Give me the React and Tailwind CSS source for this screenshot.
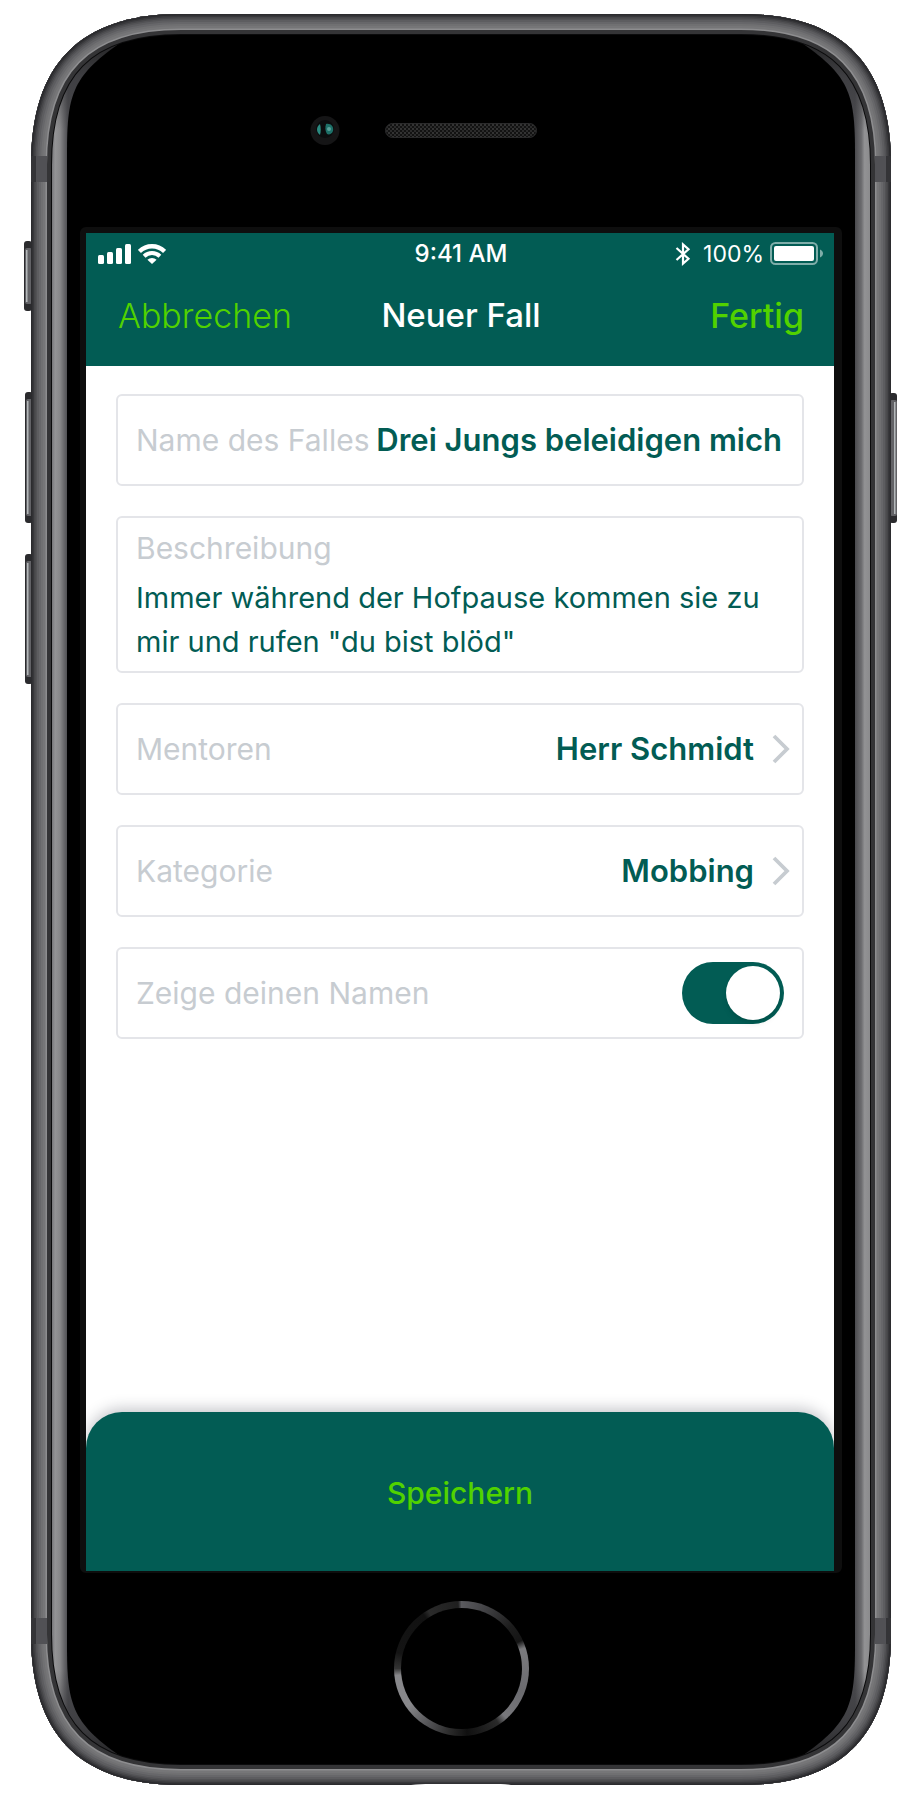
import { useState } from "react";

const BODY =
  "M181 14H741C842 14 891 64 891 165V1634C891 1735 842 1785 741 1785H181C80 1785 31 1735 31 1634V165C31 64 80 14 181 14Z";

// Edge shading of the aluminium band, from the inside out: [depth, colour]
const BAND = [
  [21, "#0b0b0c"],
  [20, "#343436"],
  [16, "#8d8d8f"],
  [14.5, "#767678"],
  [12, "#707072"],
  [10, "#67676a"],
  [8, "#5d5d60"],
  [6, "#525255"],
  [4.5, "#464649"],
  [3, "#38383b"],
  [1.5, "#2b2b2e"],
];

function SideButton({ x, y, height, flip }) {
  const shine = flip ? x + 5 : x + 2;
  return (
    <g>
      <rect x={x} y={y} width="8" height={height} rx="3" fill="#2b2b2e" />
      <rect x={x + 1} y={y + 7} width="7" height={height - 14} rx="2" fill="#626266" />
      <rect x={shine} y={y + 9} width="1.5" height={height - 18} fill="#b4b8ba" />
    </g>
  );
}

function DeviceShell() {
  return (
    <svg
      className="absolute inset-0 h-full w-full"
      viewBox="0 0 920 1800"
      preserveAspectRatio="none"
      aria-hidden="true"
    >
      <defs>
        <clipPath id="body-clip">
          <path d={BODY} />
        </clipPath>
        <linearGradient id="bevel-left" gradientUnits="userSpaceOnUse" x1="52" x2="68" y1="0" y2="0">
          <stop offset="0" stopColor="#77777a" />
          <stop offset="0.2" stopColor="#949496" />
          <stop offset="0.5" stopColor="#88888a" />
          <stop offset="0.75" stopColor="#68686b" />
          <stop offset="1" stopColor="#4a4a4e" />
        </linearGradient>
        <linearGradient id="bevel-right" gradientUnits="userSpaceOnUse" x1="855" x2="871" y1="0" y2="0">
          <stop offset="0" stopColor="#4a4a4e" />
          <stop offset="0.4" stopColor="#6c6c6f" />
          <stop offset="0.6" stopColor="#929294" />
          <stop offset="1" stopColor="#8a8a8c" />
        </linearGradient>
        <linearGradient id="bevel-fade" gradientUnits="userSpaceOnUse" x1="0" x2="0" y1="35" y2="1765">
          <stop offset="0.01" stopColor="#2c2c2e" stopOpacity="1" />
          <stop offset="0.025" stopColor="#38383b" stopOpacity="0.6" />
          <stop offset="0.055" stopColor="#38383b" stopOpacity="0" />
          <stop offset="0.945" stopColor="#38383b" stopOpacity="0" />
          <stop offset="0.975" stopColor="#38383b" stopOpacity="0.6" />
          <stop offset="0.99" stopColor="#2c2c2e" stopOpacity="1" />
        </linearGradient>
        <pattern id="mesh" width="4" height="4" patternUnits="userSpaceOnUse">
          <rect width="4" height="4" fill="#121212" />
          <rect width="2" height="2" fill="#333333" />
          <rect x="2" y="2" width="2" height="2" fill="#2b2b2b" />
        </pattern>
      </defs>

      <SideButton x={24} y={241} height={70} />
      <SideButton x={25} y={392} height={131} />
      <SideButton x={25} y={554} height={130} />
      <SideButton x={889} y={393} height={130} flip />

      <g clipPath="url(#body-clip)">
        <rect x="31" y="14" width="430" height="1771" fill="url(#bevel-left)" />
        <rect x="461" y="14" width="430" height="1771" fill="url(#bevel-right)" />
        <rect x="31" y="14" width="860" height="1771" fill="url(#bevel-fade)" />
        <path
          d="M67 155C67 96 71 77 120 43L150 30H772L802 43C851 77 855 96 855 155V1644C855 1703 851 1722 802 1756L772 1770H150L120 1756C71 1722 67 1703 67 1644Z"
          fill="#000"
        />
        {BAND.map(([depth, color]) => (
          <path key={depth} d={BODY} fill="none" stroke={color} strokeWidth={depth * 2} />
        ))}
        {[156, 1618].map((y) => (
          <g key={y}>
            <rect x="31" y={y} width="5" height="26" fill="#343437" />
            <rect x="36" y={y} width="11" height="26" fill="#515155" />
            <rect x="875" y={y} width="11" height="26" fill="#515155" />
            <rect x="886" y={y} width="5" height="26" fill="#343437" />
          </g>
        ))}
        <path d="M411 1785C418 1784 424 1784 430 1784H492C498 1784 504 1784 511 1785V1787H411Z" fill="#fff" />
      </g>

      <circle cx="325" cy="130.5" r="14.5" fill="#151516" />
      <circle cx="325" cy="129" r="9" fill="#0b0d0e" />
      <path d="M320 124C316 127 316 132 320 135C321 131 321 128 320 124Z" fill="#2b8a80" />
      <path d="M326 124C331 123 334 127 333 131C332 134 329 135 327 134C325 131 325 127 326 124Z" fill="#1d7068" />
      <circle cx="329" cy="129" r="2" fill="#5ba39b" />
      <rect x="385.5" y="123.5" width="151" height="14" rx="7" fill="url(#mesh)" stroke="#2a2a2b" />
    </svg>
  );
}

function SignalIcon() {
  return (
    <svg className="h-5 w-[34px]" viewBox="0 0 34 20" fill="#fff" aria-hidden="true">
      <rect x="0" y="11" width="6" height="9" rx="1.5" />
      <rect x="9" y="8" width="6" height="12" rx="1.5" />
      <rect x="18" y="4" width="6" height="16" rx="1.5" />
      <rect x="27" y="0" width="6" height="20" rx="1.5" />
    </svg>
  );
}

function WifiIcon() {
  return (
    <svg className="h-5 w-7" viewBox="0 0 28 20" fill="none" stroke="#fff" aria-hidden="true">
      <path d="M1.4 7.4A18 18 0 0 1 26.6 7.4" strokeWidth="4.4" />
      <path d="M6.1 12.2A11.4 11.4 0 0 1 21.9 12.2" strokeWidth="4" />
      <path d="M14 20L9.4 15.8A7 7 0 0 1 18.6 15.8Z" fill="#fff" stroke="none" />
    </svg>
  );
}

function BluetoothIcon() {
  return (
    <svg className="h-6 w-4" viewBox="0 0 16 24" fill="none" stroke="#fff" strokeWidth="2.2" aria-hidden="true">
      <path d="M1.5 6L13.5 16.8L8 21.6V2.4L13.5 7.2L1.5 18" />
    </svg>
  );
}

function BatteryIcon() {
  return (
    <svg className="h-6 w-[54px]" viewBox="0 0 54 24" aria-hidden="true">
      <rect x="1" y="1" width="46" height="21" rx="4.5" fill="none" stroke="#7fada9" strokeWidth="2" />
      <rect x="4" y="4" width="40" height="15" rx="2" fill="#fff" />
      <path d="M50 7.5C54 9 54 14 50 15.5Z" fill="#7fada9" />
    </svg>
  );
}

function Chevron() {
  return (
    <svg className="h-[30px] w-[18px]" viewBox="0 0 18 30" fill="none" stroke="#c7ccd1" strokeWidth="3.8" aria-hidden="true">
      <path d="M2 2L15 15L2 28" />
    </svg>
  );
}

const box = "rounded-md border-2 border-[#e4e5e9]";
const label = "text-[30px] leading-[44px] text-[#c7ccd1]";
const strong = "text-[31px] leading-[44px] font-semibold text-[#025c54]";

function LinkField({ name, value }) {
  return (
    <button type="button" className={`${box} flex h-[92px] w-full items-center pr-3 pl-[18px] text-left`}>
      <span className={label}>{name}</span>
      <span className={`${strong} ml-auto`}>{value}</span>
      <span className="ml-[18px]">
        <Chevron />
      </span>
    </button>
  );
}

export default function App() {
  const [title, setTitle] = useState("Drei Jungs beleidigen mich");
  const [text, setText] = useState('Immer während der Hofpause kommen sie zu mir und rufen "du bist blöd"');
  const [showName, setShowName] = useState(true);

  return (
    <div className="bg-white font-['Inter','Liberation_Sans',sans-serif]">
      <div className="relative mx-auto flex min-h-screen w-full max-w-[920px] flex-col pt-[227px] pr-[78px] pb-16 pl-20">
        <DeviceShell />

        <div className="relative flex flex-1 flex-col rounded-md border-t-[6px] border-r-8 border-b-2 border-l-[6px] border-[#0e0e0e] bg-white">
          <header className="bg-[#025c54] pb-2.5 text-white">
            <div className="grid h-[42px] grid-cols-[1fr_auto_1fr] items-center pr-2.5 pl-3 text-[23px]">
              <div className="flex items-center gap-1.5">
                <SignalIcon />
                <WifiIcon />
              </div>
              <div className="text-[24px] font-medium">9:41 AM</div>
              <div className="flex items-center justify-end">
                <BluetoothIcon />
                <span className="mr-1.5 ml-3">100%</span>
                <BatteryIcon />
              </div>
            </div>
            <nav className="grid h-[81px] grid-cols-[1fr_auto_1fr] items-center pr-[30px] pl-8 text-[34px]">
              <button type="button" className="justify-self-start font-light text-[#51d200]">
                Abbrechen
              </button>
              <h1 className="text-[33px] font-medium">Neuer Fall</h1>
              <button type="button" className="justify-self-end font-medium text-[#51d200]">
                Fertig
              </button>
            </nav>
          </header>

          <form className="flex flex-1 flex-col" onSubmit={(e) => e.preventDefault()}>
            <div className="flex flex-1 flex-col gap-[30px] px-[30px] pt-7 pb-8">
              <div className={`${box} flex h-[92px] items-center gap-1 pr-5 pl-[18px]`}>
                <label htmlFor="case-name" className={`${label} shrink-0`}>
                  Name des Falles
                </label>
                <input
                  id="case-name"
                  type="text"
                  value={title}
                  onChange={(e) => setTitle(e.target.value)}
                  className={`${strong} w-full min-w-0 flex-1 bg-transparent text-right outline-none`}
                />
              </div>

              <div className={`${box} flex h-[157px] flex-col px-[18px] pt-2`}>
                <label htmlFor="case-text" className={label}>
                  Beschreibung
                </label>
                <textarea
                  id="case-text"
                  rows={2}
                  value={text}
                  onChange={(e) => setText(e.target.value)}
                  className="mt-1.5 h-[88px] w-full resize-none overflow-hidden bg-transparent text-[29px] leading-[44px] text-[#025c54] outline-none"
                />
              </div>

              <LinkField name="Mentoren" value="Herr Schmidt" />
              <LinkField name="Kategorie" value="Mobbing" />

              <div className={`${box} flex h-[92px] items-center justify-between px-[18px]`}>
                <label htmlFor="show-name" className={label}>
                  Zeige deinen Namen
                </label>
                <input
                  id="show-name"
                  type="checkbox"
                  role="switch"
                  checked={showName}
                  onChange={(e) => setShowName(e.target.checked)}
                  className="flex h-[62px] w-[102px] shrink-0 appearance-none items-center rounded-full bg-[#c7ccd1] px-1 before:h-[54px] before:w-[54px] before:rounded-full before:bg-white before:shadow-md checked:justify-end checked:bg-[#025c54]"
                />
              </div>
            </div>

            <button
              type="submit"
              className="h-[159px] w-full rounded-t-[36px] bg-[#025c54] pt-1 text-[30px] font-medium text-[#51d200] shadow-[0_-4px_14px_rgba(40,45,60,0.25)] [clip-path:inset(-24px_0_0_0)]"
            >
              Speichern
            </button>
          </form>
        </div>

        <div className="relative mt-7 flex justify-center">
          <button
            type="button"
            aria-label="Home"
            className="h-[135px] w-[135px] rounded-full bg-[conic-gradient(#5a5a5e,#444447_20deg,#1c1c1c_50deg,#151515_65deg,#7a7a7d_72deg,#6b6b6f_110deg,#77777b_138deg,#2a2a2a_146deg,#101010_175deg,#2a2a2a_190deg,#555558_212deg,#88888b_235deg,#88888b_264deg,#333333_270deg,#141414_284deg,#111111_325deg,#2a2a2a_330deg,#1f1f1f_357deg,#5a5a5e)] p-[7px]"
          >
            <span className="block h-full w-full rounded-full bg-black" />
          </button>
        </div>
      </div>
    </div>
  );
}
